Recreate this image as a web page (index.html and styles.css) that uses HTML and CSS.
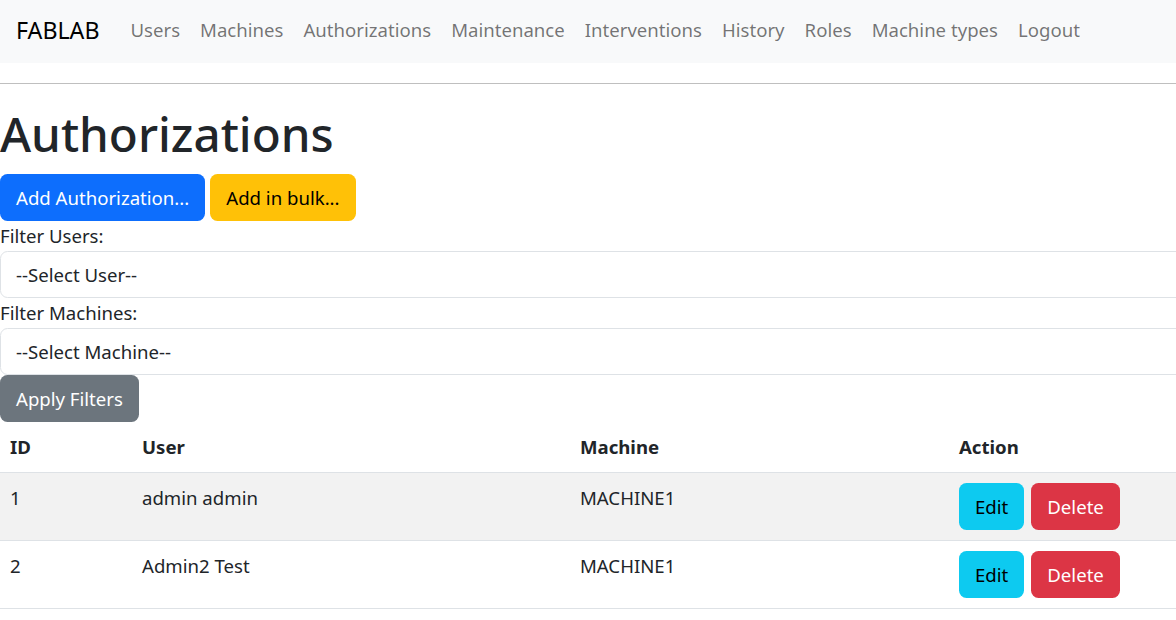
FILE: index.html
```html
<!DOCTYPE html>
<html lang="en">
<head>
<meta charset="utf-8">
<title>Authorizations</title>
<link rel="stylesheet" href="styles.css">
</head>
<body>
<nav class="navbar">
  <a class="brand" href="#">FABLAB</a>
  <ul class="nav">
    <li><a href="#">Users</a></li>
    <li><a href="#">Machines</a></li>
    <li><a href="#">Authorizations</a></li>
    <li><a href="#">Maintenance</a></li>
    <li><a href="#">Interventions</a></li>
    <li><a href="#">History</a></li>
    <li><a href="#">Roles</a></li>
    <li><a href="#">Machine types</a></li>
    <li><a href="#">Logout</a></li>
  </ul>
</nav>
<hr class="sep">
<main class="content">
  <h1 class="title">Authorizations</h1>
  <div class="actions">
    <button class="btn btn-primary">Add Authorization...</button>
    <button class="btn btn-warning">Add in bulk...</button>
  </div>
  <form class="filters">
    <label class="label">Filter Users:</label>
    <div class="select">--Select User--</div>
    <label class="label">Filter Machines:</label>
    <div class="select">--Select Machine--</div>
    <div><button type="button" class="btn btn-secondary">Apply Filters</button></div>
  </form>
  <table class="table">
    <colgroup>
      <col class="c-id"><col class="c-user"><col class="c-machine"><col class="c-action">
    </colgroup>
    <thead>
      <tr><th>ID</th><th>User</th><th>Machine</th><th>Action</th></tr>
    </thead>
    <tbody>
      <tr class="striped">
        <td>1</td><td>admin admin</td><td>MACHINE1</td>
        <td><button class="btn btn-info">Edit</button><button class="btn btn-danger">Delete</button></td>
      </tr>
      <tr>
        <td>2</td><td>Admin2 Test</td><td>MACHINE1</td>
        <td><button class="btn btn-info">Edit</button><button class="btn btn-danger">Delete</button></td>
      </tr>
    </tbody>
  </table>
</main>
</body>
</html>
```
FILE: styles.css
```css
html { overflow: hidden; }
body {
  margin: 0;
  font-family: "Noto Sans", "Open Sans", sans-serif;
  font-size: 18.6px;
  line-height: 30px;
  color: #212529;
  background: #fff;
  width: 1260px;
}
.navbar {
  background: #f8f9fa;
  height: 63px;
  display: flex;
  align-items: center;
  padding: 0 16px 4px;
  box-sizing: border-box;
}
.brand {
  font-size: 23.2px;
  color: #000;
  text-decoration: none;
  margin-right: 21px;
}
.nav {
  list-style: none;
  display: flex;
  margin: 0;
  padding: 0;
}
.nav a {
  display: block;
  padding: 0 10px;
  color: rgba(0,0,0,.55);
  text-decoration: none;
}
.sep {
  margin: 20px 0 0;
  border: 0;
  border-top: 1px solid rgba(0,0,0,.25);
}
.title {
  font-size: 47.5px;
  font-weight: 500;
  line-height: 60px;
  margin: 20px 0 10px;
}
.actions { display: flex; gap: 5px; }
.btn {
  font: inherit;
  line-height: 30px;
  padding: 7.5px 15px;
  border: 1px solid transparent;
  border-radius: 7.5px;
  cursor: pointer;
}
.btn-primary { background: #0d6efd; color: #fff; }
.btn-warning { background: #ffc107; color: #000; }
.btn-secondary { background: #6c757d; color: #fff; }
.btn-info { background: #0dcaf0; color: #000; }
.btn-danger { background: #dc3545; color: #fff; }
.btn-info + .btn-danger { margin-left: 7px; }
.filters { margin: 0; }
.label { display: block; }
.select {
  border: 1px solid #dee2e6;
  border-radius: 7.5px;
  padding: 7.5px 45px 7.5px 15px;
  line-height: 30px;
}
.table {
  width: 100%;
  border-collapse: collapse;
}
.c-id { width: 132px; }
.c-user { width: 438px; }
.c-machine { width: 379px; }
.table th, .table td {
  text-align: left;
  vertical-align: top;
  padding: 10px;
  border-bottom: 1px solid #dee2e6;
}
.table th { font-weight: 700; }
.striped td { background: #f2f2f2; }
```
